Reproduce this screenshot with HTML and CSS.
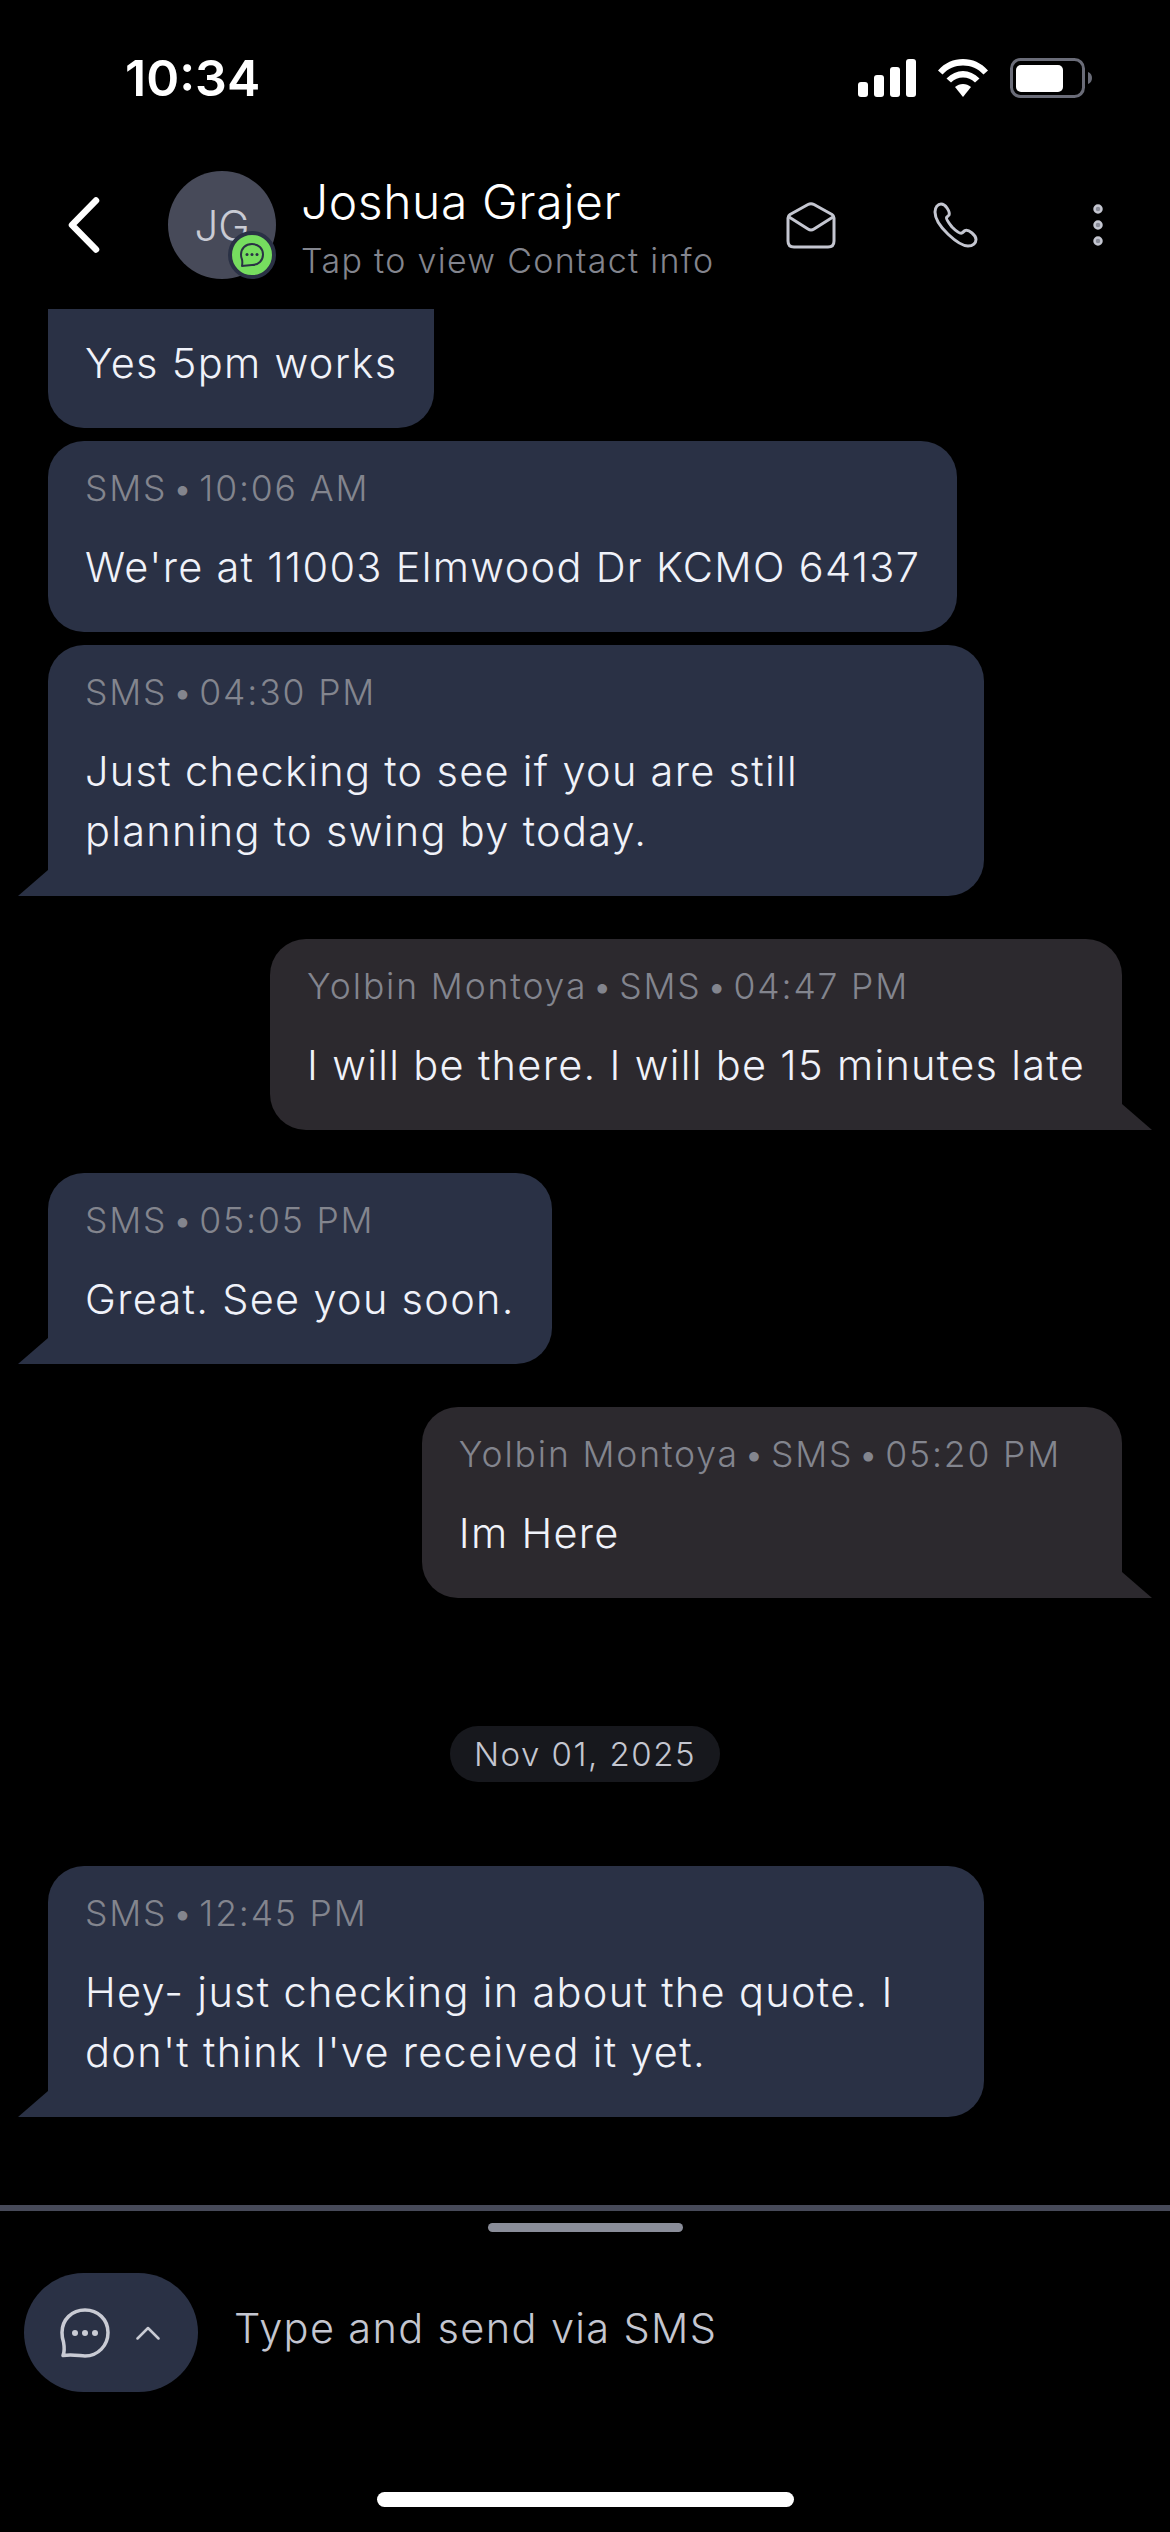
FILE: index.html
```html
<!DOCTYPE html>
<html lang="en">
<head>
    <meta charset="UTF-8">
    <meta name="viewport" content="width=device-width, initial-scale=1.0">
    <title>Joshua Grajer</title>
    <link rel="stylesheet" href="styles.css">
</head>
<body>

<div class="phone">
    <div class="status-bar">
        <span class="clock">10:34</span>
        <div class="status-icons">
            <svg width="58" height="38" viewBox="0 0 58 38" fill="#fff">
                <rect x="0" y="23" width="10" height="15" rx="3"/>
                <rect x="16" y="16" width="10" height="22" rx="3"/>
                <rect x="32" y="8" width="10" height="30" rx="3"/>
                <rect x="48" y="0" width="10" height="38" rx="3"/>
            </svg>
            <svg width="50" height="38" viewBox="0 0 50 38" fill="#fff">
                <path d="M25 0C15.500 0 7 3.600 0 11.500L4.500 15.500C10 9.500 17 6.500 25 6.500S40 9.500 45.500 15.500L50 11.500C43 3.600 34.500 0 25 0Z"/>
                <path d="M25 12C19 12 13.500 14.500 8.500 19.500L13 23.500C16.500 20 20.500 18.500 25 18.500S33.500 20 37 23.500L41.500 19.500C36.500 14.500 31 12 25 12Z"/>
                <path d="M25 25C22 25 19.500 26 17 28L25 38L33 28C30.500 26 28 25 25 25Z"/>
            </svg>
            <svg width="83" height="40" viewBox="0 0 83 40" fill="none">
                <rect x="1.500" y="1.500" width="72" height="37" rx="9" stroke="#6a6c78" stroke-width="3"/>
                <rect x="6" y="7" width="47" height="27" rx="5" fill="#fff"/>
                <path d="M78 14C81 15 82 17.500 82 20S81 25 78 26Z" fill="#6a6c78"/>
            </svg>
        </div>
    </div>

    <div class="header">
        <svg class="back" width="32" height="56" viewBox="0 0 32 56" fill="none">
            <path d="M28 3.500L4 28L28 52.500" stroke="#fff" stroke-width="6.500" stroke-linecap="round" stroke-linejoin="round"/>
        </svg>
        <div class="avatar">
            JG
            <div class="badge">
                <svg width="26" height="26" viewBox="0 0 26 26" fill="none">
                    <path d="M13 2C19.500 2 24 6.500 24 12.500S19.500 23 13 23C10.500 23 8 23.500 3 24C3.500 21 3.500 19.500 3 17.500C2.300 16 2 14 2 12.500C2 6.500 6.500 2 13 2Z" stroke="#2a3145" stroke-width="2" stroke-linejoin="round"/>
                    <circle cx="8" cy="12.500" r="1.500" fill="#2a3145"/>
                    <circle cx="13" cy="12.500" r="1.500" fill="#2a3145"/>
                    <circle cx="18" cy="12.500" r="1.500" fill="#2a3145"/>
                </svg>
            </div>
        </div>
        <div class="contact">
            <div class="contact-name">Joshua Grajer</div>
            <div class="contact-sub">Tap to view Contact info</div>
        </div>
        <div class="header-actions">
            <svg class="action-mail" width="50" height="47" viewBox="0 0 50 47" fill="none" stroke="#c4c6d0" stroke-width="3" stroke-linejoin="round">
                <path d="M2 16C2 14.500 2.500 13.500 4 12.500L22 2.500C24 1.400 26 1.400 28 2.500L46 12.500C47.500 13.500 48 14.500 48 16V39C48 42.500 46 45 42 45H8C4 45 2 42.500 2 39Z"/>
                <path d="M3 15L22 27C24 28.300 26 28.300 28 27L47 15"/>
            </svg>
            <svg class="action-phone" width="46" height="46" viewBox="0 0 46 46" fill="none">
                <path d="M3 10C3 5 6 2 9 2C11 2 13 3 15 6C17 9 18 11 17 13L14.500 15.500C14 17 16 20 20 25C24 29 28 32 30 31L33 28.500C35 27.500 37 28.500 40 31C43 33.500 44 35.500 44 37.500C44 41 41 44 36 44C27 44 3 24 3 10Z" stroke="#c4c6d0" stroke-width="3" stroke-linejoin="round"/>
            </svg>
            <svg class="action-more" width="12" height="44" viewBox="0 0 12 44" fill="#888b97" stroke="#c4c6d0" stroke-width="2.500">
                <circle cx="6" cy="6" r="3.500"/>
                <circle cx="6" cy="22" r="3.500"/>
                <circle cx="6" cy="38" r="3.500"/>
            </svg>
        </div>
    </div>

    <div class="messages">
        <div class="bubble received clipped">
            <div class="bubble-text">Yes 5pm works</div>
        </div>
        <div class="bubble received">
            <div class="bubble-meta">SMS&#8202;•&#8202;10:06 AM</div>
            <div class="bubble-text">We're at 11003 Elmwood Dr KCMO 64137</div>
        </div>
        <div class="bubble received wide tail">
            <div class="bubble-meta">SMS&#8202;•&#8202;04:30 PM</div>
            <div class="bubble-text">Just checking to see if you are still planning to swing by today.</div>
        </div>
        <div class="bubble sent tail">
            <div class="bubble-meta">Yolbin Montoya&#8202;•&#8202;SMS&#8202;•&#8202;04:47 PM</div>
            <div class="bubble-text">I will be there. I will be 15 minutes late</div>
        </div>
        <div class="bubble received tail">
            <div class="bubble-meta">SMS&#8202;•&#8202;05:05 PM</div>
            <div class="bubble-text">Great. See you soon.</div>
        </div>
        <div class="bubble sent tail">
            <div class="bubble-meta">Yolbin Montoya&#8202;•&#8202;SMS&#8202;•&#8202;05:20 PM</div>
            <div class="bubble-text">Im Here</div>
        </div>
        <div class="date-pill">Nov 01, 2025</div>
        <div class="bubble received wide tail">
            <div class="bubble-meta">SMS&#8202;•&#8202;12:45 PM</div>
            <div class="bubble-text">Hey- just checking in about the quote. I don't think I've received it yet.</div>
        </div>
    </div>

    <div class="composer">
        <div class="handle"></div>
        <div class="composer-row">
            <div class="channel-btn">
                <svg width="50" height="50" viewBox="0 0 50 50" fill="none">
                    <path d="M25 2C38 2 48 11.500 48 24.500S38 48 25 48C20 48 13 46 3 47.500C5 43 4.500 39.500 3.500 34C2.500 31 2 28 2 24.500C2 11.500 12 2 25 2Z" stroke="#c9cbd4" stroke-width="3.500" stroke-linejoin="round"/>
                    <circle cx="15" cy="25" r="3" fill="#c9cbd4"/>
                    <circle cx="25" cy="25" r="3" fill="#c9cbd4"/>
                    <circle cx="35" cy="25" r="3" fill="#c9cbd4"/>
                </svg>
                <svg width="24" height="14" viewBox="0 0 24 14" fill="none">
                    <path d="M1.500 12.500L12 2L22.500 12.500" stroke="#c9cbd4" stroke-width="2.500" stroke-linecap="round" stroke-linejoin="round"/>
                </svg>
            </div>
            <div class="composer-placeholder">Type and send via SMS</div>
        </div>
        <div class="home-bar"></div>
    </div>
</div>

</body>
</html>
```

FILE: styles.css
```css
body {
    margin: 0;
    padding: 0;
    background-color: #000;
    font-family: 'Inter', 'Noto Sans', sans-serif;
    font-weight: 350;
}
.phone {
    width: 1170px;
    height: 2532px;
    display: flex;
    flex-direction: column;
    overflow: hidden;
    background-color: #000;
}

.status-bar {
    height: 58px;
    padding: 49px 77px 0 125px;
    display: flex;
    justify-content: space-between;
    align-items: center;
}
.clock {
    color: #fff;
    font-size: 50px;
    font-weight: 600;
}
.status-icons {
    display: flex;
    align-items: center;
    gap: 22px;
}

.header {
    height: 202px;
    flex-shrink: 0;
    padding: 34px 66px 0 68px;
    display: flex;
    align-items: center;
    box-sizing: border-box;
}
.back {
    margin-right: 68px;
}
.avatar {
    position: relative;
    width: 108px;
    height: 108px;
    border-radius: 50%;
    background-color: #474a59;
    color: #c9cbd4;
    font-size: 42px;
    display: flex;
    align-items: center;
    justify-content: center;
    margin-right: 25px;
}
.badge {
    position: absolute;
    right: 0;
    bottom: 0;
    width: 40px;
    height: 40px;
    border: 4px solid #2a3145;
    border-radius: 50%;
    background-color: #76dd5f;
    display: flex;
    align-items: center;
    justify-content: center;
}
.contact {
    flex: 1;
    padding-top: 5px;
}
.contact-name {
    color: #fff;
    font-size: 48px;
    line-height: 60px;
    letter-spacing: 0.600px;
}
.contact-sub {
    color: #83858e;
    font-size: 34px;
    line-height: 44px;
    letter-spacing: 1.300px;
    margin-top: 7px;
}
.header-actions {
    display: flex;
    align-items: center;
    gap: 96px;
}
.action-more {
    margin-left: 18px;
}

.messages {
    height: 1896px;
    flex-shrink: 0;
    overflow: hidden;
    box-sizing: border-box;
    padding: 0 48px;
    display: flex;
    flex-direction: column;
    align-items: flex-start;
}
.bubble {
    position: relative;
    box-sizing: border-box;
    padding: 23px 37px 35px;
    border-radius: 36px;
    margin-bottom: 13px;
}
.bubble.received {
    background-color: #2a3145;
}
.bubble.sent {
    background-color: #2c292e;
    align-self: flex-end;
}
.bubble.wide {
    width: 936px;
}
.bubble.clipped {
    padding-top: 24px;
    padding-bottom: 35px;
    border-top-left-radius: 0;
    border-top-right-radius: 0;
}
.bubble.tail {
    margin-bottom: 43px;
}
.bubble.received.tail {
    border-bottom-left-radius: 0;
}
.bubble.sent.tail {
    border-bottom-right-radius: 0;
}
.bubble.tail::after {
    content: "";
    position: absolute;
    bottom: 0;
    width: 30px;
    height: 26px;
}
.bubble.received.tail::after {
    left: -30px;
    background-color: #2a3145;
    clip-path: polygon(100% 0, 100% 100%, 0 100%);
}
.bubble.sent.tail::after {
    right: -30px;
    background-color: #2c292e;
    clip-path: polygon(0 0, 100% 100%, 0 100%);
}
.bubble-meta {
    color: #83858e;
    font-size: 35.500px;
    line-height: 50px;
    letter-spacing: 1.850px;
    margin-bottom: 23px;
}
.bubble.sent .bubble-meta {
    padding-right: 24px;
}
.bubble-text {
    color: #f0f2f9;
    font-size: 41.500px;
    line-height: 60px;
    letter-spacing: 1.300px;
}

.date-pill {
    align-self: center;
    margin-top: 85px;
    margin-bottom: 84px;
    padding: 0 24px;
    height: 56px;
    line-height: 56px;
    border-radius: 28px;
    background-color: #17181d;
    color: #c4c6d0;
    font-size: 33px;
    letter-spacing: 1.500px;
}

.composer {
    flex: 1;
    border-top: 6px solid #474a59;
    display: flex;
    flex-direction: column;
    align-items: center;
    padding-top: 12px;
}
.handle {
    width: 195px;
    height: 9px;
    border-radius: 5px;
    background-color: #8a8d99;
}
.composer-row {
    align-self: stretch;
    display: flex;
    align-items: center;
    margin-top: 41px;
    padding-left: 24px;
}
.channel-btn {
    width: 174px;
    height: 119px;
    border-radius: 60px;
    background-color: #2a3145;
    display: flex;
    align-items: center;
    gap: 26px;
    padding-left: 36px;
    box-sizing: border-box;
}
.composer-placeholder {
    margin-left: 36px;
    margin-bottom: 10px;
    color: #c4c6d0;
    font-size: 41.500px;
    letter-spacing: 1.350px;
}
.home-bar {
    width: 417px;
    height: 15px;
    border-radius: 8px;
    background-color: #fff;
    margin-top: 100px;
}
```
